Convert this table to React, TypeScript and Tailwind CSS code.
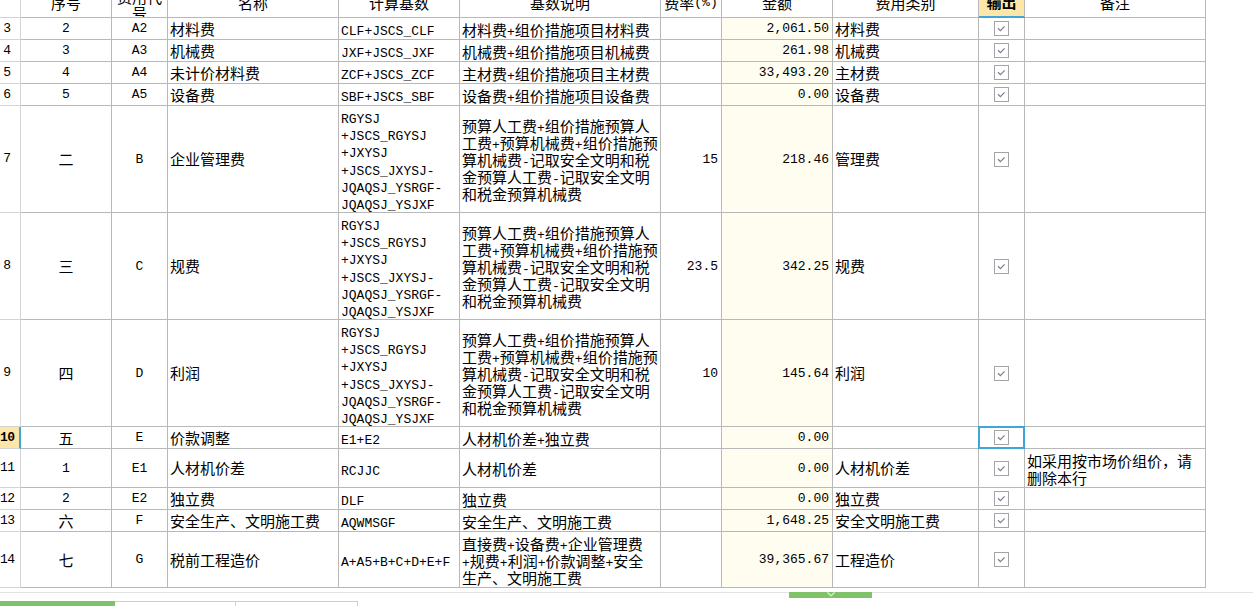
import React from 'react'

type Row = {
  no: number
  seq: string
  code: string
  name: string
  base: string[]
  desc: string[]
  rate?: string
  amount: string
  cat?: string
  note?: string[]
  h: string
  selected?: boolean
}

const LONG_BASE = ['RGYSJ', '+JSCS_RGYSJ', '+JXYSJ', '+JSCS_JXYSJ-', 'JQAQSJ_YSRGF-', 'JQAQSJ_YSJXF']
const LONG_DESC = [
  '预算人工费+组价措施预算人',
  '工费+预算机械费+组价措施预',
  '算机械费-记取安全文明和税',
  '金预算人工费-记取安全文明',
  '和税金预算机械费',
]

const ROWS: Row[] = [
  { no: 3, seq: '2', code: 'A2', name: '材料费', base: ['CLF+JSCS_CLF'], desc: ['材料费+组价措施项目材料费'], amount: '2,061.50', cat: '材料费', h: 'h-[22px]' },
  { no: 4, seq: '3', code: 'A3', name: '机械费', base: ['JXF+JSCS_JXF'], desc: ['机械费+组价措施项目机械费'], amount: '261.98', cat: '机械费', h: 'h-[22px]' },
  { no: 5, seq: '4', code: 'A4', name: '未计价材料费', base: ['ZCF+JSCS_ZCF'], desc: ['主材费+组价措施项目主材费'], amount: '33,493.20', cat: '主材费', h: 'h-[22px]' },
  { no: 6, seq: '5', code: 'A5', name: '设备费', base: ['SBF+JSCS_SBF'], desc: ['设备费+组价措施项目设备费'], amount: '0.00', cat: '设备费', h: 'h-[22px]' },
  { no: 7, seq: '二', code: 'B', name: '企业管理费', base: LONG_BASE, desc: LONG_DESC, rate: '15', amount: '218.46', cat: '管理费', h: 'h-[107px]' },
  { no: 8, seq: '三', code: 'C', name: '规费', base: LONG_BASE, desc: LONG_DESC, rate: '23.5', amount: '342.25', cat: '规费', h: 'h-[107px]' },
  { no: 9, seq: '四', code: 'D', name: '利润', base: LONG_BASE, desc: LONG_DESC, rate: '10', amount: '145.64', cat: '利润', h: 'h-[107px]' },
  { no: 10, seq: '五', code: 'E', name: '价款调整', base: ['E1+E2'], desc: ['人材机价差+独立费'], amount: '0.00', h: 'h-[22px]', selected: true },
  { no: 11, seq: '1', code: 'E1', name: '人材机价差', base: ['RCJJC'], desc: ['人材机价差'], amount: '0.00', cat: '人材机价差', note: ['如采用按市场价组价，请', '删除本行'], h: 'h-[39px]' },
  { no: 12, seq: '2', code: 'E2', name: '独立费', base: ['DLF'], desc: ['独立费'], amount: '0.00', cat: '独立费', h: 'h-[22px]' },
  { no: 13, seq: '六', code: 'F', name: '安全生产、文明施工费', base: ['AQWMSGF'], desc: ['安全生产、文明施工费'], amount: '1,648.25', cat: '安全文明施工费', h: 'h-[22px]' },
  {
    no: 14, seq: '七', code: 'G', name: '税前工程造价', base: ['A+A5+B+C+D+E+F'],
    desc: ['直接费+设备费+企业管理费', '+规费+利润+价款调整+安全', '生产、文明施工费'],
    amount: '39,365.67', cat: '工程造价', h: 'h-[56px]',
  },
]

// ascii runs get the narrow mono face, like the half-width latin of the original.
// line-height 0 on the run so only the parent's strut sets the line pitch
function Txt({ s }: { s: string }) {
  const parts = s.match(/[\x20-\x7e]+|[^\x20-\x7e]+/g) ?? []
  return (
    <>
      {parts.map((p, i) =>
        /^[\x20-\x7e]/.test(p) ? (
          <span key={i} className="font-['Liberation_Mono',monospace] text-[13px] leading-[0]">{p}</span>
        ) : (
          <span key={i}>{p}</span>
        ),
      )}
    </>
  )
}

function Lines({ lines, lead }: { lines: string[]; lead: string }) {
  return (
    <div className={lead}>
      {lines.map((l, i) => (
        <div key={i}><Txt s={l} /></div>
      ))}
    </div>
  )
}

function Check() {
  return (
    <svg width="15" height="15" viewBox="0 0 15 15">
      <rect x="0.5" y="0.5" width="14" height="14" fill="#fff" stroke="#a4a4a4" />
      <path d="M4 7.3 L6.4 9.6 L10.6 5.4" fill="none" stroke="#7c7c92" strokeWidth="1.2" />
    </svg>
  )
}

const cell = 'shrink-0 flex items-center overflow-hidden whitespace-nowrap border-r border-b border-[#b8b8b8]'
const head = 'shrink-0 flex items-center justify-center overflow-hidden whitespace-nowrap border-r border-b border-[#b8b8b8] pt-[2px]'

function Header() {
  return (
    <div className="flex h-[31px]">
      <div className="w-[21px] shrink-0 border-r border-b border-[#d4d4d4]" />
      <div className={`${head} w-[91px]`}>序号</div>
      <div className={`${head} w-[56px] flex-col pt-[5px] leading-[16px]`}>
        <div>费用代</div>
        <div>号</div>
      </div>
      <div className={`${head} w-[171px]`}>名称</div>
      <div className={`${head} w-[121px]`}>计算基数</div>
      <div className={`${head} w-[201px]`}>基数说明</div>
      <div className={`${head} w-[61px]`}><Txt s="费率(%)" /></div>
      <div className={`${head} w-[111px]`}>金额</div>
      <div className={`${head} w-[146px]`}>费用类别</div>
      <div className={`${head} w-[46px] bg-[#fde7a8] font-bold border-b-2 border-b-[#3ea6d8]`}>输出</div>
      <div className={`${head} w-[181px]`}>备注</div>
    </div>
  )
}

function DataRow({ r }: { r: Row }) {
  return (
    <div className={`flex ${r.h}`}>
      <div
        className={
          r.selected
            ? 'w-[21px] shrink-0 flex items-center border-b border-[#d4d4d4] border-r-2 border-r-[#3ea6d8] bg-[#fde7a8] font-bold'
            : 'w-[21px] shrink-0 flex items-center border-r border-b border-[#d4d4d4]'
        }
      >
        <div className="w-[14px] text-center font-['Liberation_Mono',monospace] text-[13px] tracking-[-0.5px]">{r.no}</div>
      </div>
      <div className={`${cell} w-[91px] justify-center pt-[1px]`}><Txt s={r.seq} /></div>
      <div className={`${cell} w-[56px] justify-center pt-[1px]`}><Txt s={r.code} /></div>
      <div className={`${cell} w-[171px] pl-[2px] pt-[1px]`}><Txt s={r.name} /></div>
      <div className={`${cell} w-[121px] pl-[2px] pt-[1px]`}>
        <Lines lines={r.base} lead="leading-[17.3px]" />
      </div>
      <div className={`${cell} w-[201px] pl-[2px] pt-[1px]`}>
        <Lines lines={r.desc} lead="leading-[17px]" />
      </div>
      <div className={`${cell} w-[61px] justify-end pr-[3px] pt-[1px]`}>{r.rate && <Txt s={r.rate} />}</div>
      <div className={`${cell} w-[111px] justify-end pr-[3px] pt-[1px] bg-[#fefdf0]`}><Txt s={r.amount} /></div>
      <div className={`${cell} w-[146px] pl-[2px] pt-[1px]`}>{r.cat && <Txt s={r.cat} />}</div>
      <div className={`${cell} w-[46px] justify-center relative overflow-visible`}>
        <Check />
        {r.selected && (
          <div className="absolute -left-px -top-px -right-px -bottom-px border-2 border-[#3ea6d8]" />
        )}
      </div>
      <div className={`${cell} w-[181px] pl-[2px] pt-[1px]`}>
        {r.note && <Lines lines={r.note} lead="leading-[17px]" />}
      </div>
    </div>
  )
}

export default function App() {
  return (
    <div className="h-[606px] w-full overflow-hidden bg-white text-black font-['Noto_Sans_CJK_SC',sans-serif] text-[15px]">
      <div className="-mt-[13px]">
        <Header />
        {ROWS.map((r) => (
          <DataRow key={r.no} r={r} />
        ))}
      </div>
      <div className="h-[4px]" />
      {/* horizontal scroller */}
      <div className="h-[9px] border-t border-[#e2e2e2]">
        <div className="-mt-px ml-[789px] w-[83px] h-[6px] bg-[#80c26a] flex justify-center">
          <svg width="10" height="5" viewBox="0 0 10 5">
            <path d="M1.5 0.5 L5 3.8 L8.5 0.5" fill="none" stroke="#e8f5e2" strokeWidth="1.1" />
          </svg>
        </div>
      </div>
      {/* sheet tabs */}
      <div className="flex h-[24px]">
        <div className="w-[115px] bg-[#80c26a]" />
        <div className="w-[121px] border-t border-r border-[#b6e2a4]" />
        <div className="w-[122px] border-t border-r border-[#b6e2a4]" />
      </div>
    </div>
  )
}
